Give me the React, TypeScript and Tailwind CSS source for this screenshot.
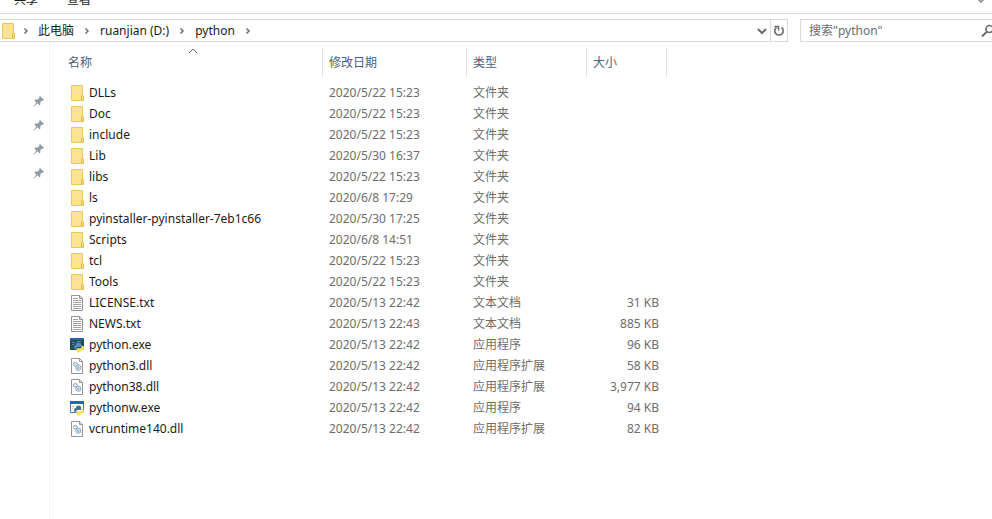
import React from "react";

type Kind = "folder" | "text" | "python" | "pythonw" | "dll";
type Entry = { name: string; date: string; kind: Kind; size?: string };

const entries: Entry[] = [
  { name: "DLLs", date: "2020/5/22 15:23", kind: "folder" },
  { name: "Doc", date: "2020/5/22 15:23", kind: "folder" },
  { name: "include", date: "2020/5/22 15:23", kind: "folder" },
  { name: "Lib", date: "2020/5/30 16:37", kind: "folder" },
  { name: "libs", date: "2020/5/22 15:23", kind: "folder" },
  { name: "ls", date: "2020/6/8 17:29", kind: "folder" },
  { name: "pyinstaller-pyinstaller-7eb1c66", date: "2020/5/30 17:25", kind: "folder" },
  { name: "Scripts", date: "2020/6/8 14:51", kind: "folder" },
  { name: "tcl", date: "2020/5/22 15:23", kind: "folder" },
  { name: "Tools", date: "2020/5/22 15:23", kind: "folder" },
  { name: "LICENSE.txt", date: "2020/5/13 22:42", kind: "text", size: "31 KB" },
  { name: "NEWS.txt", date: "2020/5/13 22:43", kind: "text", size: "885 KB" },
  { name: "python.exe", date: "2020/5/13 22:42", kind: "python", size: "96 KB" },
  { name: "python3.dll", date: "2020/5/13 22:42", kind: "dll", size: "58 KB" },
  { name: "python38.dll", date: "2020/5/13 22:42", kind: "dll", size: "3,977 KB" },
  { name: "pythonw.exe", date: "2020/5/13 22:42", kind: "pythonw", size: "94 KB" },
  { name: "vcruntime140.dll", date: "2020/5/13 22:42", kind: "dll", size: "82 KB" },
];

const typeNames: Record<Kind, string> = {
  folder: "文件夹",
  text: "文本文档",
  python: "应用程序",
  pythonw: "应用程序",
  dll: "应用程序扩展",
};

function FolderIcon() {
  return (
    <svg width="16" height="16" viewBox="0 0 16 16" aria-hidden="true">
      <path d="M2.500 0.500h11v10l1 1v4h-12z" fill="#fce38f" stroke="#e8c964" />
      <path d="M12.500 15v-4l1-1 1 1v4z" fill="#fbdc78" stroke="#e6c04f" />
    </svg>
  );
}

function SnakeMark({ top }: { top: string }) {
  return (
    <g>
      <path d="M7 7q0-1.500 2.500-1.500T12 7v3H9q-2 0-2 2H6.500Q5 12 5 10t2-2z" fill={top} />
      <path d="M12.500 8.500Q15 8.500 15 11.300T13 13.500h-1q0 2-2.200 2T7.500 14V12.500q0-1.200 1.200-1.200h2.600q1.200 0 1.200-1.200z" fill="#fcdf60" />
    </g>
  );
}

function FileIcon({ kind }: { kind: Kind }) {
  if (kind === "folder") return <FolderIcon />;
  if (kind === "python")
    return (
      <svg width="16" height="16" viewBox="0 0 16 16" aria-hidden="true">
        <path d="M1 1h14v12H1z" fill="#254c59" />
        <path d="M1 1h14v2H1z" fill="#2864a0" />
        <path d="M3 5.500h3M3 7.500h2M8 4.500h4" stroke="#5d8590" fill="none" />
        <SnakeMark top="#4f8fc8" />
      </svg>
    );
  if (kind === "pythonw")
    return (
      <svg width="16" height="16" viewBox="0 0 16 16" aria-hidden="true">
        <path d="M1.500 1.500h13v11h-13z" fill="#fff" stroke="#3e7ec0" />
        <path d="M1 1h14v3H1z" fill="#2168b5" />
        <path d="M3 6.500h2M3 8.500h1" stroke="#b8c7d5" fill="none" />
        <SnakeMark top="#41709c" />
      </svg>
    );
  return (
    <svg width="16" height="16" viewBox="0 0 16 16" aria-hidden="true">
      <path d="M2.500 0.500h8l3 3v12h-11z" fill="#fff" stroke="#959595" />
      <path d="M10.500 0.500v3h3" fill="none" stroke="#959595" />
      {kind === "text" ? (
        <path d="M4 3.500h5M4 5.500h8M4 7.500h8M4 9.500h8M4 11.500h8M4 13.500h8" stroke="#a3a3a3" fill="none" />
      ) : (
        <g fill="#e3eef7" stroke="#8ba3ba">
          <circle cx="6.300" cy="6.300" r="1.900" />
          <circle cx="9.300" cy="9.700" r="2.600" />
          <circle cx="9.300" cy="9.700" r=".8" />
        </g>
      )}
    </svg>
  );
}

function Crumb({ children }: { children: React.ReactNode }) {
  return (
    <li className="flex items-center">
      <a href="#" className="whitespace-nowrap text-[#1a1a1a]">{children}</a>
      <svg className="mx-[9px]" width="8" height="8" viewBox="0 0 8 8" aria-hidden="true">
        <path d="M2.500 1.500L5 4 2.500 6.500" fill="none" stroke="#6e6e6e" strokeWidth="1.500" />
      </svg>
    </li>
  );
}

function Pin() {
  return (
    <svg width="12" height="12" viewBox="0 0 12 12" aria-hidden="true">
      <path d="M7 1l4.200 4-1.400.7-.8-.2-1.700 1.800.1 2.100-1 .8-2-2L1 11.500l-.5-.3 2.800-3.700-2-1.900.9-1 2.200.1 2-1.900-.2-.8z" fill="#929aa2" />
    </svg>
  );
}

export default function App() {
  return (
    <div className="flex min-h-screen flex-col overflow-hidden bg-white font-['Noto_Sans','Noto_Sans_CJK_SC',sans-serif] text-[12px] leading-[20px] text-[#1a1a1a]">
      <div className="flex h-[14px] items-start justify-between overflow-hidden border-b border-[#dadbdc] pr-[7px] pl-[14px]">
        <nav className="-mt-[10px] flex gap-[29px]" aria-label="功能区">
          <a href="#">共享</a>
          <a href="#">查看</a>
        </nav>
        <svg className="-mt-[5px]" width="8" height="8" viewBox="0 0 8 8" aria-hidden="true">
          <path d="M1 4l3 3 3-3" fill="none" stroke="#888" strokeWidth="1.500" />
        </svg>
      </div>

      <div className="mt-[5px] flex h-[23px] gap-3">
        <div className="flex min-w-0 flex-1 border-y border-[#d9d9d9]">
          <nav className="flex flex-1 items-center" aria-label="路径">
            <FolderIcon />
            <svg className="mx-[6px]" width="8" height="8" viewBox="0 0 8 8" aria-hidden="true">
              <path d="M2.500 1.500L5 4 2.500 6.500" fill="none" stroke="#6e6e6e" strokeWidth="1.500" />
            </svg>
            <ol className="flex pl-[2px]">
              <Crumb>此电脑</Crumb>
              <Crumb>ruanjian (D:)</Crumb>
              <Crumb>python</Crumb>
            </ol>
          </nav>
          <button type="button" aria-label="以前的位置" className="flex w-4 items-center justify-center">
            <svg width="10" height="10" viewBox="0 0 10 10">
              <path d="M1 3l4 4 4-4" fill="none" stroke="#6b6b6b" strokeWidth="2" />
            </svg>
          </button>
          <button type="button" aria-label="刷新" className="flex w-[18px] items-center justify-center border-x border-[#d9d9d9]">
            <svg width="12" height="12" viewBox="0 0 12 12">
              <path d="M3.500 2.500A4.200 4.200 0 1 0 8.500 2.500" fill="none" stroke="#6b6b6b" strokeWidth="1.600" />
              <path d="M1.500 1.500h4v4" fill="none" stroke="#6b6b6b" strokeWidth="1.500" />
            </svg>
          </button>
        </div>
        <label className="flex w-[192px] items-center overflow-hidden border border-r-0 border-[#d9d9d9] pl-2">
          <input
            type="search"
            aria-label="搜索"
            placeholder={'搜索"python"'}
            className="min-w-0 flex-1 bg-transparent outline-none placeholder:text-[#6d6d6d]"
          />
          <svg className="-mr-[3px] shrink-0" width="14" height="14" viewBox="0 0 14 14" aria-hidden="true">
            <circle cx="8.500" cy="5" r="3.500" fill="none" stroke="#6b6b6b" strokeWidth="1.600" />
            <path d="M6 7.500L1 12.500" stroke="#6b6b6b" strokeWidth="2" />
          </svg>
        </label>
      </div>

      <div className="flex flex-1">
        <aside className="flex w-[50px] shrink-0 flex-col items-end gap-3 border-r border-[#f3f3f3] pt-[53px] pr-1">
          <Pin />
          <Pin />
          <Pin />
          <Pin />
        </aside>
        <main className="ml-[3px] flex-1 border-l border-[#fafafa] pt-[6px]">
          <table className="w-[613px] table-fixed border-separate border-spacing-0">
            <colgroup>
              <col className="w-[269px]" />
              <col className="w-[144px]" />
              <col className="w-[120px]" />
              <col className="w-[80px]" />
            </colgroup>
            <thead>
              <tr className="h-[29px] text-left text-[#4c607a]">
                <th className="relative border-r border-[#e5e5e5] p-0 pl-[14px] font-normal">
                  名称
                  <svg className="absolute top-0 left-[134px]" width="10" height="6" viewBox="0 0 10 6" aria-hidden="true">
                    <path d="M1 5l4-4 4 4" fill="none" stroke="#6b6b6b" />
                  </svg>
                </th>
                <th className="border-r border-[#e5e5e5] p-0 pl-[6px] font-normal">修改日期</th>
                <th className="border-r border-[#e5e5e5] p-0 pl-[6px] font-normal">类型</th>
                <th className="border-r border-[#e5e5e5] p-0 pl-[6px] font-normal">大小</th>
              </tr>
            </thead>
            <tbody className="text-[#6d6d6d] before:block before:h-[5px] before:content-['']">
              {entries.map((e) => (
                <tr key={e.name} className="h-[21px]">
                  <td className="p-0 pl-[15px]">
                    <div className="flex items-center gap-1 whitespace-nowrap text-[#1a1a1a]">
                      <FileIcon kind={e.kind} />
                      <span>{e.name}</span>
                    </div>
                  </td>
                  <td className="p-0 pl-[6px]">{e.date}</td>
                  <td className="p-0 pl-[6px]">{typeNames[e.kind]}</td>
                  <td className="p-0 pr-2 text-right">{e.size}</td>
                </tr>
              ))}
            </tbody>
          </table>
        </main>
      </div>
    </div>
  );
}
